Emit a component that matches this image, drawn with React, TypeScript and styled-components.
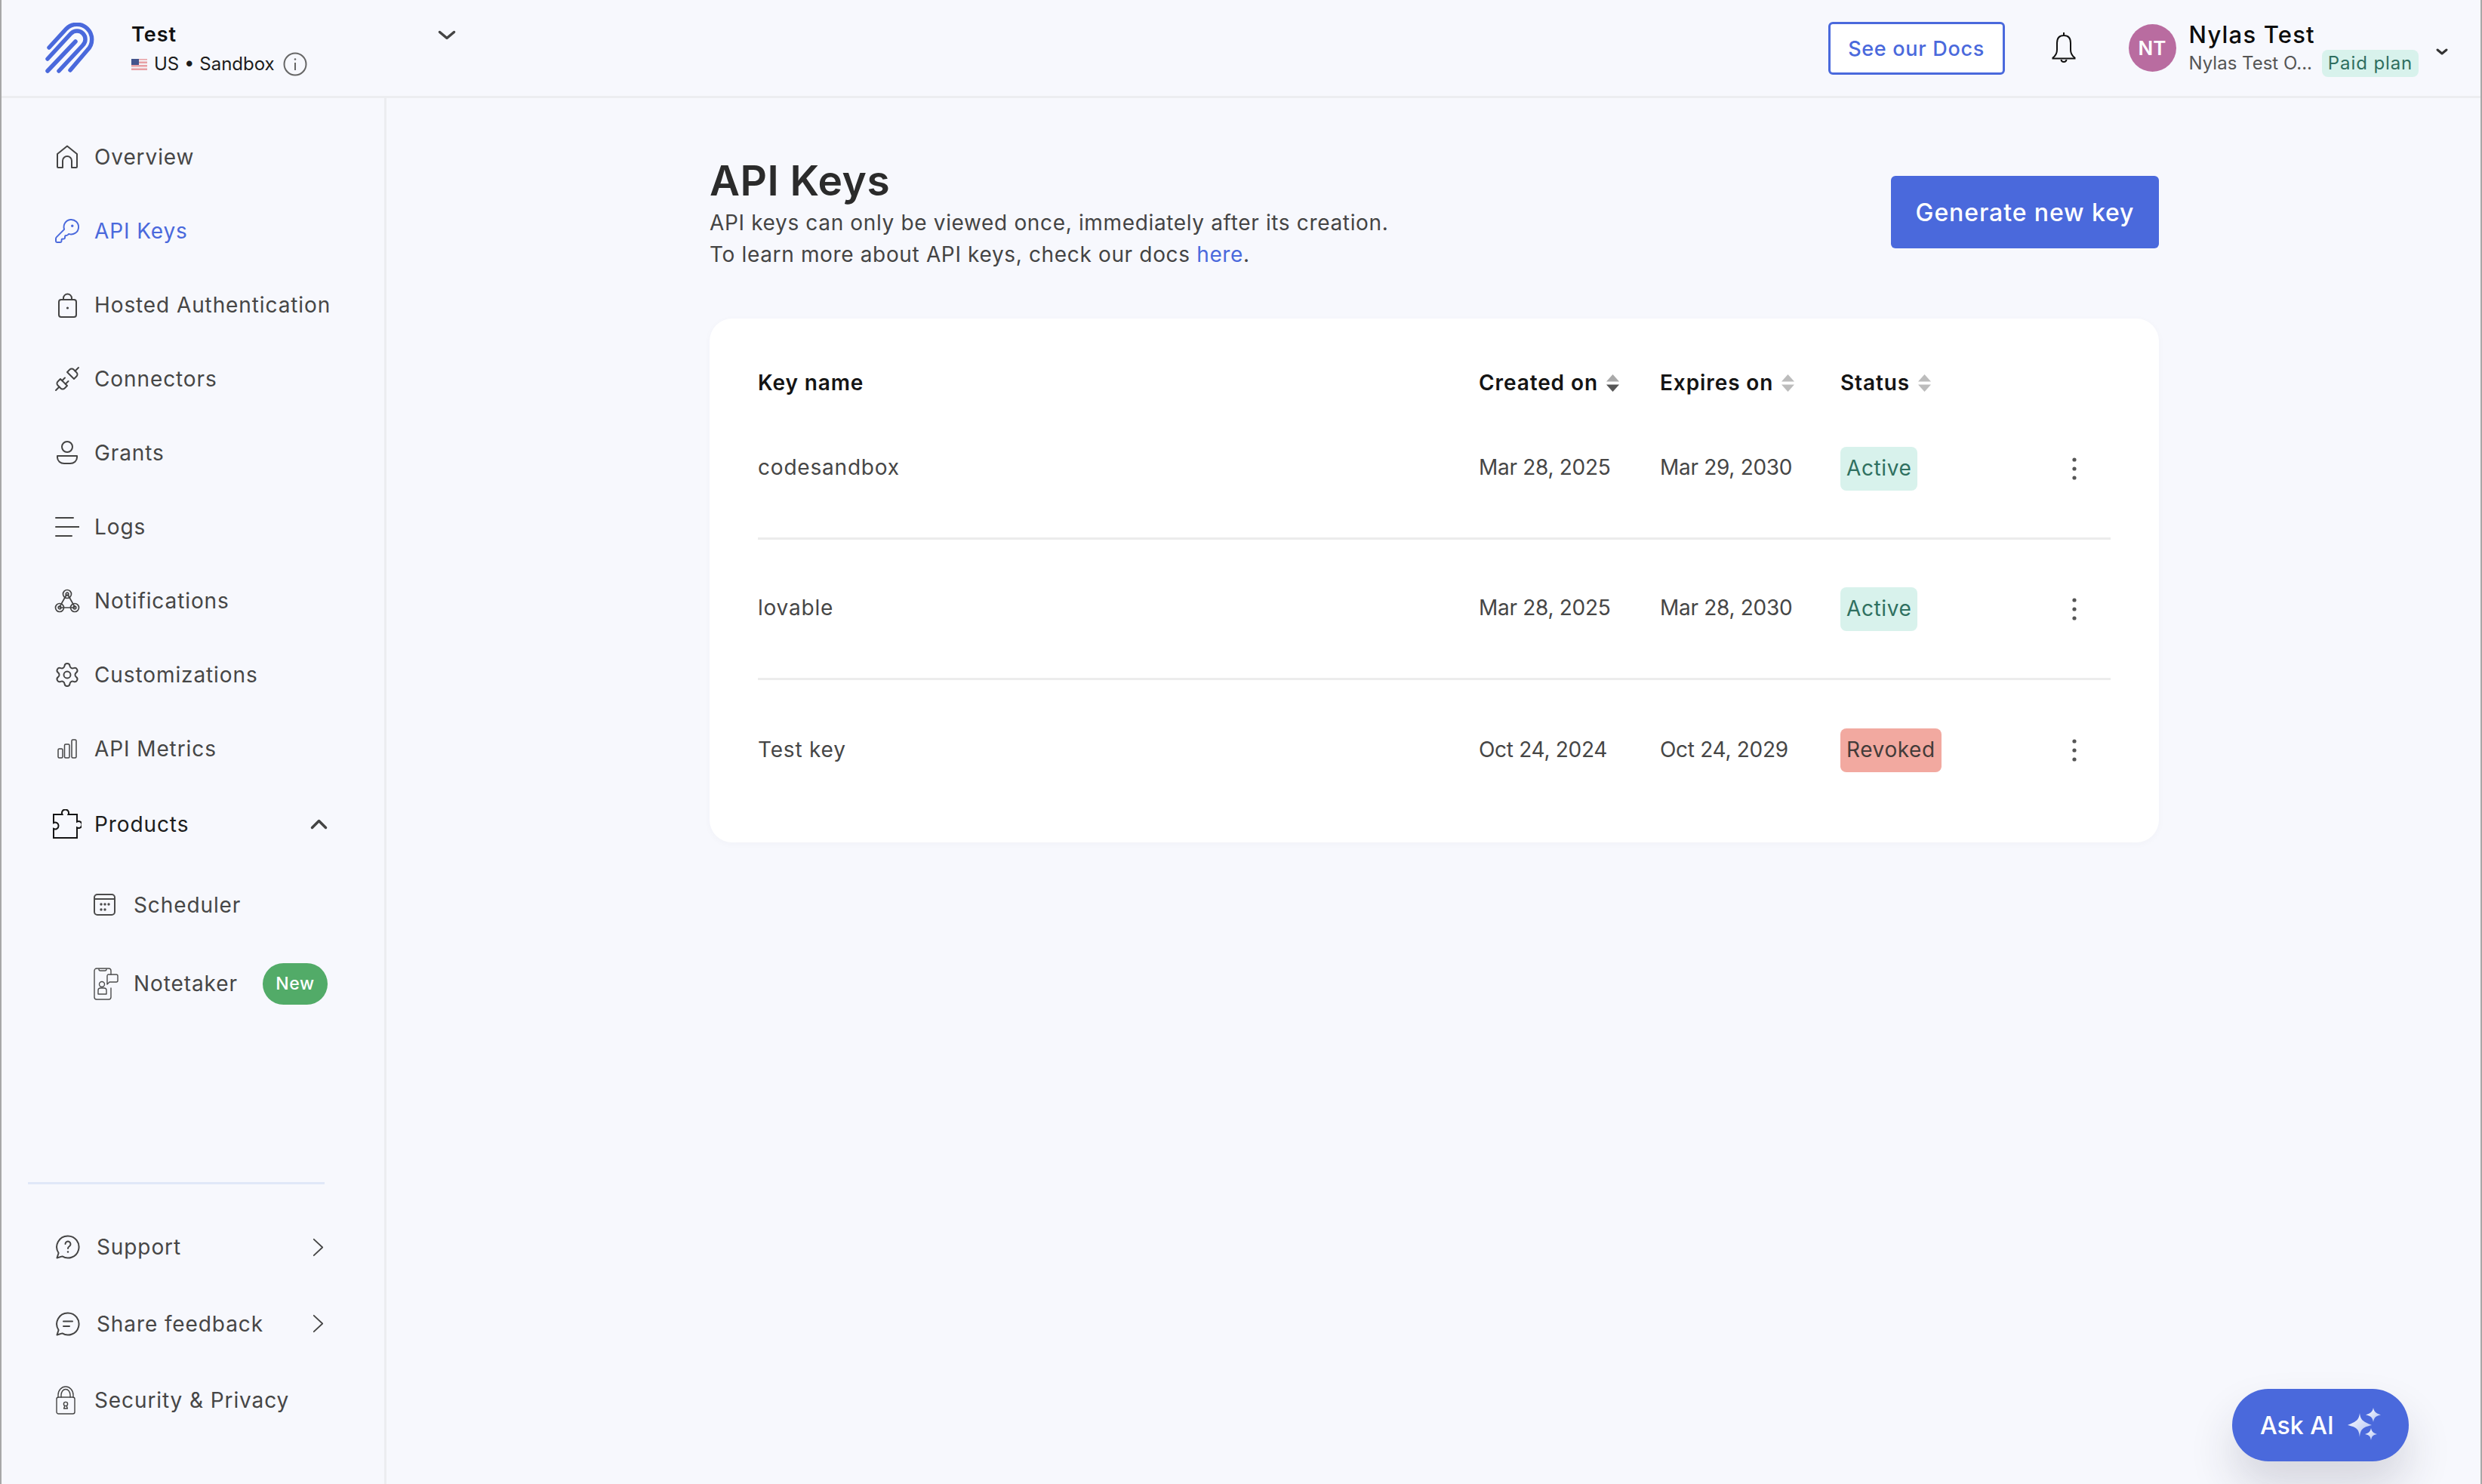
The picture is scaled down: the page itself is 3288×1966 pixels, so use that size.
import React, { FC, ReactNode } from 'react';
import styled, { createGlobalStyle } from 'styled-components';
import { KeyRound, Settings, Unplug } from 'lucide-react';

const BLUE = '#4a69dc';
const TEXT = '#464646';

const GlobalStyle = createGlobalStyle`
    html, body {
        margin: 0;
        padding: 0;
        background: #f7f8fd;
    }
    body {
        font-family: 'Inter', 'Liberation Sans', sans-serif;
        color: ${TEXT};
    }
`;

const Page = styled.div`
    position: relative;
    display: flex;
    flex-direction: column;
    width: 100vw;
    height: 100vh;
    box-sizing: border-box;
    overflow: hidden;
    background: #f7f8fd;
    border-left: 2px solid #a8a8a8;
    border-right: 2px solid #a8a8a8;
`;

const Header = styled.header`
    display: flex;
    align-items: flex-start;
    flex: 0 0 130px;
    box-sizing: border-box;
    height: 130px;
    border-bottom: 3px solid #ecedf0;
`;

const LogoSlot = styled.div`
    flex: 0 0 172px;
    padding: 30px 0 0 58px;
    box-sizing: border-box;
`;

const Workspace = styled.div`
    flex: 0 0 431px;
    display: flex;
    justify-content: space-between;
    padding-top: 30px;
`;

const WorkspaceName = styled.div`
    font-size: 27px;
    line-height: 32px;
    font-weight: 600;
    letter-spacing: 1px;
    color: #111;
`;

const RegionRow = styled.div`
    display: flex;
    align-items: center;
    margin-top: 7px;
    font-size: 24px;
    line-height: 32px;
    color: #1c1c1c;
`;

const Flag = styled.svg`
    margin-right: 9px;
`;

const InfoIcon = styled.svg`
    margin-left: 11px;
`;

const WorkspaceChevron = styled.div`
    margin-top: 8px;
`;

const HeaderRight = styled.div`
    flex: 1;
    display: flex;
    align-items: flex-start;
    justify-content: flex-end;
    padding-right: 42px;
`;

const DocsButton = styled.button`
    width: 234px;
    height: 70px;
    margin-top: 29px;
    padding: 0;
    box-sizing: border-box;
    background: #fff;
    border: 3px solid ${BLUE};
    border-radius: 6px;
    color: ${BLUE};
    font-family: inherit;
    font-size: 27px;
    font-weight: 500;
    letter-spacing: 0.7px;
`;

const Bell = styled.svg`
    margin: 42px 0 0 62px;
`;

const Avatar = styled.div`
    display: flex;
    align-items: center;
    justify-content: center;
    width: 63px;
    height: 63px;
    margin: 32px 17px 0 70px;
    border-radius: 50%;
    background: #b96ca0;
    color: #fff;
    font-size: 26px;
    font-weight: 600;
`;

const Account = styled.div`
    padding-top: 26px;
`;

const AccountName = styled.div`
    font-size: 31px;
    line-height: 40px;
    font-weight: 500;
    letter-spacing: 1.2px;
    color: #0c0c0c;
`;

const AccountRow = styled.div`
    display: flex;
    align-items: center;
    gap: 13px;
`;

const AccountOrg = styled.span`
    font-size: 24px;
    line-height: 36px;
    color: #555;
`;

const PaidBadge = styled.span`
    width: 128px;
    height: 36px;
    line-height: 36px;
    text-align: center;
    border-radius: 8px;
    background: #d8f2ec;
    color: #2f6f5f;
    font-size: 24px;
    letter-spacing: 0.9px;
`;

const AccountChevron = styled.div`
    margin: 58px 0 0 22px;
`;

const Body = styled.div`
    flex: 1;
    display: flex;
    min-height: 0;
`;

const Sidebar = styled.nav`
    flex: 0 0 510px;
    min-width: 0;
    display: flex;
    flex-direction: column;
    justify-content: space-between;
    box-sizing: border-box;
    border-right: 3px solid #ecedf0;
    padding-top: 29px;
    font-size: 28px;
    letter-spacing: 0.9px;
`;

const NavList = styled.div`
    display: flex;
    flex-direction: column;
`;

const NavRow = styled.div<{ $active?: boolean; $strong?: boolean; $nudge?: number }>`
    display: flex;
    align-items: center;
    height: 98px;
    margin-top: ${(p) => p.$nudge ?? 0}px;
    padding-left: 70px;
    padding-right: 74px;
    color: ${(p) => (p.$active ? BLUE : p.$strong ? '#1c1c1c' : TEXT)};
`;

const NavIcon = styled.span<{ $color?: string }>`
    flex: 0 0 34px;
    min-width: 0;
    margin-right: 19px;
    display: flex;
    align-items: center;
    justify-content: center;
    color: ${(p) => p.$color ?? '#444'};

    svg {
        flex-shrink: 0;
    }
`;

const NavLabel = styled.span`
    flex: 1;
    white-space: nowrap;
`;

const SubRow = styled.div<{ $nudge?: number }>`
    display: flex;
    align-items: center;
    height: 100px;
    margin-top: ${(p) => p.$nudge ?? 0}px;
    padding-left: 122px;
    padding-right: 75px;
    color: ${TEXT};
`;

const SubIcon = styled.span`
    flex: 0 0 53px;
    display: flex;
    align-items: center;
    color: #4c4c4c;
`;

const NewBadge = styled.span`
    width: 86px;
    height: 55px;
    line-height: 55px;
    text-align: center;
    border-radius: 28px;
    background: #52ab68;
    color: #fff;
    font-size: 23px;
    font-weight: 500;
    letter-spacing: 0.6px;
`;

const SidebarFooter = styled.div`
    display: flex;
    flex-direction: column;
    padding-bottom: 60px;
`;

const FooterDivider = styled.div`
    height: 3px;
    margin: 0 79px 33px 35px;
    background: #e0e8f8;
`;

const FooterRow = styled.div`
    display: flex;
    align-items: center;
    height: 101.5px;
    padding-left: 72px;
    padding-right: 80px;
    color: ${TEXT};
`;

const FooterIcon = styled.span<{ $narrow?: boolean }>`
    flex: 0 0 ${(p) => (p.$narrow ? 51 : 54)}px;
    display: flex;
    align-items: center;
    color: #444;
`;

const Main = styled.main`
    flex: 1;
    box-sizing: border-box;
    padding: 78px 426px 0 428px;
`;

const TitleRow = styled.div`
    display: flex;
    justify-content: space-between;
    height: 214px;
`;

const Title = styled.h1`
    margin: 0;
    font-size: 55px;
    line-height: 62px;
    font-weight: 600;
    letter-spacing: 0.5px;
    color: #2b2b2b;
`;

const Description = styled.p`
    margin: 4px 0 0;
    font-size: 28px;
    line-height: 42px;
    letter-spacing: 0.65px;
    color: #444;
`;

const DocLink = styled.a`
    color: ${BLUE};
`;

const GenerateButton = styled.button`
    width: 355px;
    height: 96px;
    margin-top: 25px;
    padding: 0;
    border: none;
    border-radius: 6px;
    background: ${BLUE};
    color: #fff;
    font-family: inherit;
    font-size: 32px;
    font-weight: 500;
    letter-spacing: 0.9px;
`;

const Card = styled.section`
    height: 694px;
    box-sizing: border-box;
    padding: 60px 64px 0;
    border-radius: 30px;
    background: #fff;
    box-shadow: 0 2px 10px rgba(60, 70, 110, 0.03);
`;

const COLUMNS = '955px 240px 239px 1fr';

const HeadRow = styled.div`
    display: grid;
    grid-template-columns: ${COLUMNS};
    align-items: center;
    height: 50px;
    color: #141414;
    font-size: 28px;
    font-weight: 600;
    letter-spacing: 0.9px;
`;

const HeadCell = styled.div`
    display: flex;
    align-items: center;
    gap: 11px;
`;

const KeyRow = styled.div<{ $last?: boolean }>`
    display: grid;
    grid-template-columns: ${COLUMNS};
    align-items: center;
    height: 186px;
    box-sizing: border-box;
    border-bottom: ${(p) => (p.$last ? 'none' : '3px solid #ececec')};
    color: ${TEXT};
    font-size: 28px;
`;

const KeyName = styled.div`
    padding-bottom: 3px;
    letter-spacing: 0.8px;
`;

const DateCell = styled.div`
    padding-bottom: 3px;
    letter-spacing: -0.3px;
`;

const Rows = styled.div`
    margin-top: -3px;
`;

const StatusCell = styled.div`
    display: flex;
    align-items: center;
    justify-content: space-between;
    padding-right: 45px;
`;

const Status = styled.span<{ $revoked?: boolean }>`
    height: 58px;
    line-height: 56px;
    padding: 0 8px;
    border-radius: 8px;
    background: ${(p) => (p.$revoked ? '#f2a9a0' : '#d8f2ec')};
    color: ${(p) => (p.$revoked ? '#443c3a' : '#2f7060')};
    font-size: 28px;
    letter-spacing: 0.6px;
`;

const Kebab = styled.svg`
    display: block;
`;

const AskAi = styled.button`
    position: absolute;
    right: 95px;
    bottom: 30px;
    display: flex;
    align-items: center;
    gap: 18px;
    width: 234px;
    height: 96px;
    padding: 0 0 0 37px;
    box-sizing: border-box;
    border: none;
    border-radius: 48px;
    background: ${BLUE};
    color: #fff;
    font-family: 'Inter', sans-serif;
    font-size: 32px;
    font-weight: 500;
    box-shadow: 0 34px 60px rgba(40, 40, 60, 0.16);
`;

const Chevron: FC<{ dir: 'up' | 'down' | 'right'; w: number; h: number; stroke: number; color?: string }> = ({
    dir,
    w,
    h,
    stroke,
    color = '#444',
}) => {
    const d =
        dir === 'down'
            ? `M${stroke} ${stroke} L${w / 2} ${h - stroke} L${w - stroke} ${stroke}`
            : dir === 'up'
              ? `M${stroke} ${h - stroke} L${w / 2} ${stroke} L${w - stroke} ${h - stroke}`
              : `M${stroke} ${stroke} L${w - stroke} ${h / 2} L${stroke} ${h - stroke}`;
    return (
        <svg width={w} height={h} viewBox={`0 0 ${w} ${h}`} fill="none">
            <path d={d} stroke={color} strokeWidth={stroke} strokeLinecap="round" strokeLinejoin="round" />
        </svg>
    );
};

const Logo = () => (
    <svg width="68" height="68" viewBox="0 0 68 68" fill="none" stroke={BLUE} strokeWidth="5.5" strokeLinecap="round">
        <path d="M5 33 L28 8 A19.8 19.8 0 0 1 56 36 L33 63" />
        <path d="M3 48 L34.2 14.2 A11 11 0 0 1 49.8 29.8 L18 64" />
        <path d="M3 64 L40 25" />
    </svg>
);

const Icon: FC<{ size?: number; w?: number; h?: number; sw?: number; children: ReactNode }> = ({
    size = 32,
    w,
    h,
    sw = 2,
    children,
}) => (
    <svg
        width={w ?? size}
        height={h ?? size}
        viewBox={`0 0 ${w ?? size} ${h ?? size}`}
        fill="none"
        stroke="currentColor"
        strokeWidth={sw}
        strokeLinecap="round"
        strokeLinejoin="round"
    >
        {children}
    </svg>
);

const HomeIcon = () => (
    <Icon w={30} h={32}>
        <path d="M2 29 V12 L15 1.5 L28 12 V29 a1 1 0 0 1 -1 1 H21 V21 a6 6 0 0 0 -12 0 V30 H3 a1 1 0 0 1 -1 -1 Z" />
    </Icon>
);

const BagIcon = () => (
    <Icon w={26} h={33}>
        <rect x="2" y="9" width="23" height="23" rx="3" />
        <path d="M8 9 V7 a5 5 0 0 1 11 0 V9" />
        <circle cx="13.5" cy="20" r="1.6" fill="currentColor" stroke="none" />
    </Icon>
);

const GrantsIcon = () => (
    <Icon w={30} h={32}>
        <circle cx="15" cy="8" r="7" />
        <path d="M2 20 H28 V22 a9 8 0 0 1 -9 8 H11 a9 8 0 0 1 -9 -8 Z" />
    </Icon>
);

const LogsIcon = () => (
    <Icon h={28}>
        <path d="M1 2 H24 M1 14 H32 M1 26 H22" />
    </Icon>
);

const WebhookIcon = () => (
    <Icon w={34} h={32} sw={1.7}>
        <circle cx="17" cy="7" r="5.5" />
        <circle cx="17" cy="7" r="1.8" />
        <circle cx="7" cy="25" r="5.5" />
        <circle cx="7" cy="25" r="1.8" />
        <circle cx="27" cy="25" r="5.5" />
        <circle cx="27" cy="25" r="1.8" />
        <path d="M18 8 L27 24 M16 8 L7 24 M8 25 H26" />
    </Icon>
);

const BarsIcon = () => (
    <Icon w={26} h={26} sw={1.5}>
        <rect x="1" y="13" width="6" height="12" rx="1.5" />
        <rect x="9.5" y="7" width="6.5" height="18" rx="1.5" />
        <rect x="19" y="1" width="6" height="24" rx="1.5" />
    </Icon>
);

const PuzzleIcon = () => (
    <svg width="38" height="39" viewBox="0 0 38 39" fill="none" stroke="#151515" strokeWidth="2">
        <path d="M1 7 H12.5 A4.5 4.5 0 1 1 20.5 7 H32 V16.5 A4.5 4.5 0 1 1 32 24.5 V38 H1 V26 A4.5 4.5 0 1 0 1 18 Z" />
    </svg>
);

const CalendarIcon = () => (
    <Icon w={29} h={29}>
        <rect x="1" y="1" width="27" height="27" rx="4" />
        <path d="M1 7 H28" />
        <g fill="currentColor" stroke="none">
            <circle cx="10" cy="14" r="1.7" />
            <circle cx="15" cy="14" r="1.7" />
            <circle cx="20" cy="14" r="1.7" />
            <circle cx="10" cy="21" r="1.7" />
            <circle cx="15" cy="21" r="1.7" />
        </g>
    </Icon>
);

const NotetakerIcon = () => (
    <Icon w={33} h={43} sw={1.4}>
        <path d="M23 9 V4 a3 3 0 0 0 -3 -3 H4 a3 3 0 0 0 -3 3 V39 a3 3 0 0 0 3 3 H20 a3 3 0 0 0 3 -3 V27" />
        <path d="M7 2 a2 2 0 0 0 2 2 H15 a2 2 0 0 0 2 -2" />
        <path d="M19 9 H30 a2 2 0 0 1 2 2 V17 a2 2 0 0 1 -2 2 H21 L18 22 V11 a2 2 0 0 1 1 -2 Z" />
        <circle cx="11" cy="22" r="3.5" />
        <path d="M6 35 V30 a3 3 0 0 1 3 -3 H14 a3 3 0 0 1 3 3 V35 Z" />
    </Icon>
);

const BubbleIcon: FC<{ children: ReactNode }> = ({ children }) => (
    <Icon>
        <path d="M16 1.5 A14.5 14.5 0 1 1 8.5 28.4 L1.5 30.5 L3.6 24 A14.5 14.5 0 0 1 16 1.5 Z" />
        {children}
    </Icon>
);

const PadlockIcon = () => (
    <Icon w={26} h={38} sw={1.4}>
        <rect x="1" y="15" width="24" height="22" rx="2.5" />
        <path d="M3 15 V12 a10 11 0 0 1 20 0 V15" />
        <path d="M7 15 V12 a6 7.5 0 0 1 12 0 V15" />
        <circle cx="13" cy="24" r="2.6" />
        <path d="M11.8 26.5 L10.6 30 H15.4 L14.2 26.5" />
    </Icon>
);

const SortIcon: FC<{ active?: boolean }> = ({ active }) => (
    <svg width="17" height="23" viewBox="0 0 17 23">
        <path d="M8.5 0 L17 9.5 H0 Z" fill={active ? '#a9a9a9' : '#bcbcbc'} />
        <path d="M0 13.5 H17 L8.5 23 Z" fill={active ? '#555' : '#bcbcbc'} />
    </svg>
);

const keys = [
    { name: 'codesandbox', created: 'Mar 28, 2025', expires: 'Mar 29, 2030', status: 'Active' },
    { name: 'lovable', created: 'Mar 28, 2025', expires: 'Mar 28, 2030', status: 'Active' },
    { name: 'Test key', created: 'Oct 24, 2024', expires: 'Oct 24, 2029', status: 'Revoked' },
];

const topNav: { label: string; icon: ReactNode; active?: boolean }[] = [
    { label: 'Overview', icon: <HomeIcon /> },
    { label: 'API Keys', icon: <KeyRound size={36} strokeWidth={1.3} />, active: true },
    { label: 'Hosted Authentication', icon: <BagIcon /> },
    { label: 'Connectors', icon: <Unplug size={36} strokeWidth={1.3} /> },
    { label: 'Grants', icon: <GrantsIcon /> },
    { label: 'Logs', icon: <LogsIcon /> },
    { label: 'Notifications', icon: <WebhookIcon /> },
    { label: 'Customizations', icon: <Settings size={36} strokeWidth={1.3} /> },
    { label: 'API Metrics', icon: <BarsIcon /> },
];

export default function App() {
    return (
        <>
            <GlobalStyle />
            <Page>
                <Header>
                    <LogoSlot>
                        <Logo />
                    </LogoSlot>
                    <Workspace>
                        <div>
                            <WorkspaceName>Test</WorkspaceName>
                            <RegionRow>
                                <Flag width="21" height="15" viewBox="0 0 21 15">
                                    <rect width="21" height="15" fill="#e8a0a4" />
                                    <path d="M0 2.5 H21 M0 7 H21 M0 11.5 H21" stroke="#f4f4f6" strokeWidth="2" />
                                    <rect width="10" height="8" fill="#44558c" />
                                </Flag>
                                US • Sandbox
                                <InfoIcon width="32" height="32" viewBox="0 0 32 32" fill="none" stroke="#666">
                                    <circle cx="16" cy="16" r="14.5" strokeWidth="2" />
                                    <path d="M16 14 V24" strokeWidth="2" />
                                    <circle cx="16" cy="9.5" r="1.3" fill="#666" stroke="none" />
                                </InfoIcon>
                            </RegionRow>
                        </div>
                        <WorkspaceChevron>
                            <Chevron dir="down" w={26} h={15} stroke={3.5} />
                        </WorkspaceChevron>
                    </Workspace>
                    <HeaderRight>
                        <DocsButton>See our Docs</DocsButton>
                        <Bell width="32" height="42" viewBox="0 0 32 42" fill="none" stroke="#111" strokeWidth="2">
                            <path d="M16 1 V5 M16 5 C10 5 7 9 7 15 V24 C7 29 5 32 1.5 34.5 V35.5 H30.5 V34.5 C27 32 25 29 25 24 V15 C25 9 22 5 16 5 Z" />
                            <path d="M12.5 37 C13 41 19 41 19.5 37" />
                        </Bell>
                        <Avatar>NT</Avatar>
                        <Account>
                            <AccountName>Nylas Test</AccountName>
                            <AccountRow>
                                <AccountOrg>Nylas Test O...</AccountOrg>
                                <PaidBadge>Paid plan</PaidBadge>
                            </AccountRow>
                        </Account>
                        <AccountChevron>
                            <Chevron dir="down" w={18} h={11} stroke={3} color="#333" />
                        </AccountChevron>
                    </HeaderRight>
                </Header>
                <Body>
                    <Sidebar>
                        <NavList>
                            {topNav.map((item) => (
                                <NavRow key={item.label} $active={item.active}>
                                    <NavIcon $color={item.active ? BLUE : undefined}>{item.icon}</NavIcon>
                                    <NavLabel>{item.label}</NavLabel>
                                </NavRow>
                            ))}
                            <NavRow $strong $nudge={1.5}>
                                <NavIcon>
                                    <PuzzleIcon />
                                </NavIcon>
                                <NavLabel>Products</NavLabel>
                                <Chevron dir="up" w={25} h={16} stroke={3.5} />
                            </NavRow>
                            <SubRow $nudge={8}>
                                <SubIcon>
                                    <CalendarIcon />
                                </SubIcon>
                                <NavLabel>Scheduler</NavLabel>
                            </SubRow>
                            <SubRow $nudge={4.5}>
                                <SubIcon>
                                    <NotetakerIcon />
                                </SubIcon>
                                <NavLabel>Notetaker</NavLabel>
                                <NewBadge>New</NewBadge>
                            </SubRow>
                        </NavList>
                        <SidebarFooter>
                            <FooterDivider />
                            <FooterRow>
                                <FooterIcon>
                                    <BubbleIcon>
                                        <path d="M12.5 12 a3.5 3.5 0 1 1 5.5 3 c-1.2 .8 -2 1.5 -2 3" />
                                        <circle cx="16" cy="22.5" r="1.2" fill="currentColor" stroke="none" />
                                    </BubbleIcon>
                                </FooterIcon>
                                <NavLabel>Support</NavLabel>
                                <Chevron dir="right" w={15} h={25} stroke={1.8} />
                            </FooterRow>
                            <FooterRow>
                                <FooterIcon>
                                    <BubbleIcon>
                                        <path d="M10 12.5 H22 M10 19 H18" />
                                    </BubbleIcon>
                                </FooterIcon>
                                <NavLabel>Share feedback</NavLabel>
                                <Chevron dir="right" w={15} h={25} stroke={1.8} />
                            </FooterRow>
                            <FooterRow>
                                <FooterIcon $narrow>
                                    <PadlockIcon />
                                </FooterIcon>
                                <NavLabel>Security &amp; Privacy</NavLabel>
                            </FooterRow>
                        </SidebarFooter>
                    </Sidebar>
                    <Main>
                        <TitleRow>
                            <div>
                                <Title>API Keys</Title>
                                <Description>
                                    API keys can only be viewed once, immediately after its creation.
                                    <br />
                                    To learn more about API keys, check our docs <DocLink>here</DocLink>.
                                </Description>
                            </div>
                            <GenerateButton>Generate new key</GenerateButton>
                        </TitleRow>
                        <Card>
                            <HeadRow>
                                <HeadCell>Key name</HeadCell>
                                <HeadCell>
                                    Created on <SortIcon active />
                                </HeadCell>
                                <HeadCell>
                                    Expires on <SortIcon />
                                </HeadCell>
                                <HeadCell>
                                    Status <SortIcon />
                                </HeadCell>
                            </HeadRow>
                            <Rows>
                                {keys.map((key, index) => (
                                    <KeyRow key={key.name} $last={index === keys.length - 1}>
                                        <KeyName>{key.name}</KeyName>
                                        <DateCell>{key.created}</DateCell>
                                        <DateCell>{key.expires}</DateCell>
                                        <StatusCell>
                                            <Status $revoked={key.status === 'Revoked'}>{key.status}</Status>
                                            <Kebab width="6" height="30" viewBox="0 0 6 30" fill="#555">
                                                <circle cx="3" cy="3" r="2.6" />
                                                <circle cx="3" cy="15" r="2.6" />
                                                <circle cx="3" cy="27" r="2.6" />
                                            </Kebab>
                                        </StatusCell>
                                    </KeyRow>
                                ))}
                            </Rows>
                        </Card>
                    </Main>
                </Body>
                <AskAi>
                    Ask AI
                    <svg width="46" height="46" viewBox="0 0 46 46">
                        <defs>
                            <linearGradient id="spark" x1="0" y1="0" x2="1" y2="1">
                                <stop offset="0" stopColor="#ffffff" />
                                <stop offset="1" stopColor="#aebff2" />
                            </linearGradient>
                        </defs>
                        <g fill="url(#spark)">
                            <path d="M16 7 C17 15 19 18 32 23 C19 26 17 29 16 39 C15 29 13 26 0 23 C13 18 15 15 16 7 Z" />
                            <path d="M34 0 C35 5 37 7 44 9.5 C37 11 35 13 34 19 C33 13 31 11 24 9.5 C31 7 33 5 34 0 Z" />
                            <path d="M31 27 C32 31 33 33 39 35 C33 36 32 38 31 43 C30 38 29 36 23 35 C29 33 30 31 31 27 Z" />
                        </g>
                    </svg>
                </AskAi>
            </Page>
        </>
    );
}
